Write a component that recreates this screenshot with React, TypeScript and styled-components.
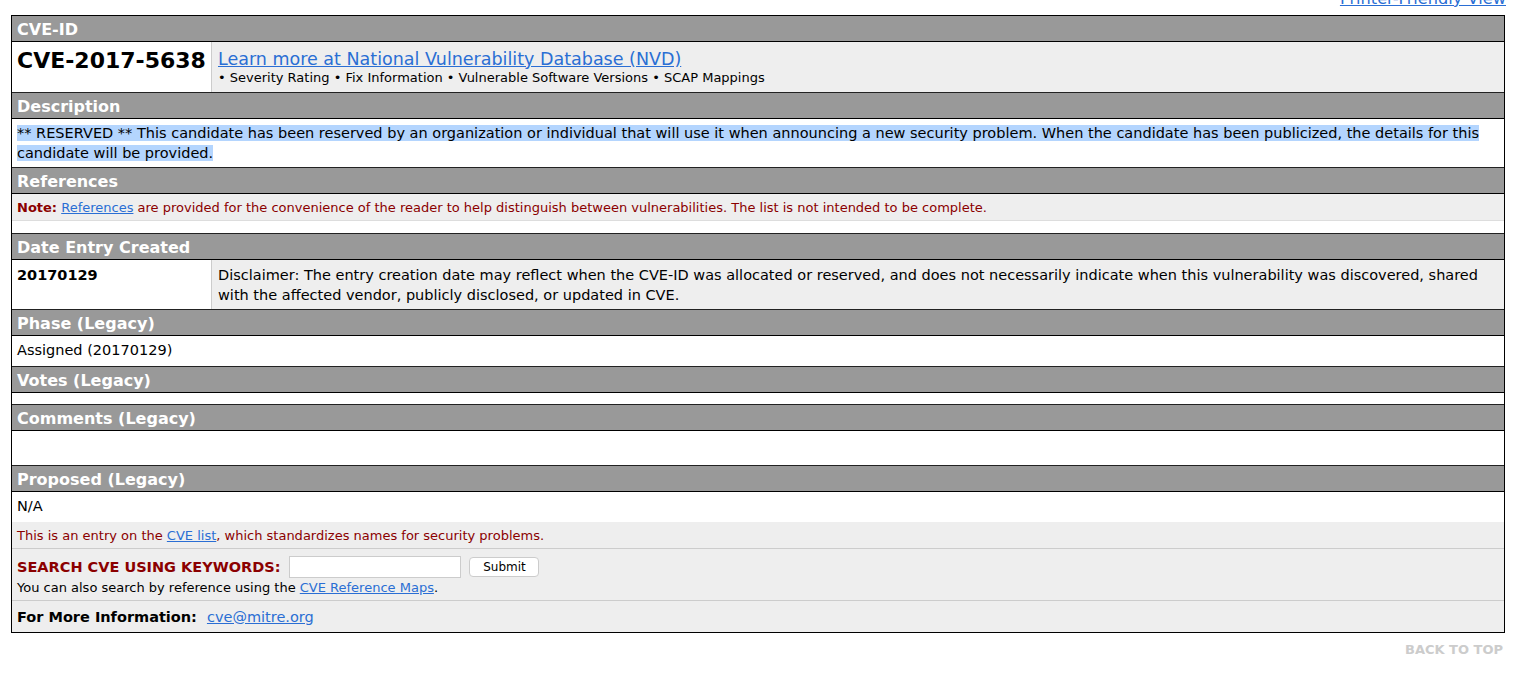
import React from "react";
import styled, { createGlobalStyle } from "styled-components";

const Global = createGlobalStyle`
  html, body { margin: 0; padding: 0; background: #fff; }
  body { font-family: "DejaVu Sans", Verdana, sans-serif; color: #000; overflow: hidden; }
  a { color: #2a6ed4; }
`;

const Page = styled.div`
  width: 1494px;
  padding-left: 11px;
`;

const TopLinkRow = styled.div`
  display: flex;
  justify-content: flex-end;
  margin-top: -9px;
  margin-right: -1px;
  height: 16px;
  line-height: 16px;
  font-size: 16.2px;
`;

const Table = styled.div`
  margin-top: 8px;
  border: 1px solid #000;
  display: flex;
  flex-direction: column;
`;

const SectionHeader = styled.div<{ $first?: boolean }>`
  height: 23px;
  padding-top: 2px;
  line-height: 23px;
  background: #999;
  color: #fff;
  font-weight: bold;
  font-size: 16px;
  padding-left: 5px;
  border-top: ${(p) => (p.$first ? "none" : "1px solid #222")};
  border-bottom: 1px solid #000;
`;

const SplitRow = styled.div<{ $h: number }>`
  display: grid;
  grid-template-columns: 200px 1fr;
  height: ${(p) => p.$h}px;
  align-items: stretch;
`;

const LeftCell = styled.div<{ $pad: number }>`
  background: #fff;
  border-right: 1px solid #ccc;
  padding: ${(p) => p.$pad}px 5px 0;
  display: flex;
  align-items: flex-start;
  white-space: nowrap;
`;

const RightCell = styled.div<{ $center?: boolean }>`
  background: #eee;
  padding: ${(p) => (p.$center ? "0 6px" : "5px 6px")};
  display: flex;
  flex-direction: column;
  justify-content: ${(p) => (p.$center ? "center" : "flex-start")};
  font-size: 14.5px;
  line-height: 20px;
`;

const CveId = styled.span`
  font-weight: bold;
  font-size: 22px;
  line-height: 26px;
`;

const BigLink = styled.a`
  font-size: 17.5px;
  line-height: 20px;
`;

const Bullets = styled.div`
  font-size: 13px;
  line-height: 17px;
`;

const DateId = styled.span`
  font-weight: bold;
  font-size: 14.5px;
  line-height: 20px;
`;

const TextCell = styled.div<{ $h?: number }>`
  background: #fff;
  min-height: ${(p) => p.$h ?? 0}px;
  padding: 4px 5px;
  font-size: 14.5px;
  line-height: 20px;
  color: #000;
  box-sizing: border-box;
`;

const Spacer = styled.div<{ $h: number }>`
  height: ${(p) => p.$h}px;
  background: #fff;
`;

const Selected = styled.span`
  background: #b4d5fe;
`;

const Note = styled.div`
  background: #eee;
  color: #8b0000;
  font-size: 13px;
  height: 26px;
  line-height: 28px;
  padding: 0 5px;
  border-bottom: 1px solid #ddd;
`;

const NoteLabel = styled.b`
  color: #8b0000;
`;

const Footer = styled.div`
  background: #eee;
  display: flex;
  flex-direction: column;
`;

const FooterBlock = styled.div<{ $h: number; $line?: boolean; $shift?: number }>`
  min-height: ${(p) => p.$h}px;
  padding: ${(p) => p.$shift ?? 0}px 5px 0;
  border-bottom: ${(p) => (p.$line ? "1px solid #ccc" : "none")};
  box-sizing: border-box;
  display: flex;
  flex-direction: column;
  justify-content: center;
`;

const FooterText = styled.div<{ $red?: boolean }>`
  font-size: 13px;
  line-height: 16px;
  color: ${(p) => (p.$red ? "#8b0000" : "#000")};
`;

const SearchLine = styled.div`
  display: flex;
  align-items: center;
  gap: 9px;
  height: 26px;
`;

const SearchLabel = styled.span`
  font-weight: bold;
  font-size: 14.5px;
  color: #8b0000;
`;

const SearchInput = styled.input`
  width: 166px;
  height: 20px;
  border: 1px solid #ccc;
  padding: 0 2px;
  margin: 0;
  background: #fff;
  box-sizing: content-box;
`;

const SubmitButton = styled.button`
  font-family: "DejaVu Sans", Verdana, sans-serif;
  font-size: 12px;
  height: 20px;
  width: 70px;
  padding: 0;
  background: #fff;
  border: 1px solid #ccc;
  border-radius: 4px;
  color: #000;
  margin-left: -1px;
`;

const InfoLine = styled.div`
  font-size: 14.5px;
  display: flex;
  gap: 10px;
  align-items: center;
`;

const InfoLabel = styled.b``;

const BackRow = styled.div`
  display: flex;
  justify-content: flex-end;
  padding-top: 9px;
  padding-right: 2px;
  font-size: 13px;
  font-weight: bold;
  color: #ccc;
  line-height: 16px;
`;

export default function App() {
  return (
    <>
      <Global />
      <Page>
        <TopLinkRow>
          <a href="#">Printer-Friendly View</a>
        </TopLinkRow>
        <Table>
          <SectionHeader $first>CVE-ID</SectionHeader>
          <SplitRow $h={50}>
            <LeftCell $pad={6}>
              <CveId>CVE-2017-5638</CveId>
            </LeftCell>
            <RightCell $center>
              <BigLink href="#">Learn more at National Vulnerability Database (NVD)</BigLink>
              <Bullets>• Severity Rating • Fix Information • Vulnerable Software Versions • SCAP Mappings</Bullets>
            </RightCell>
          </SplitRow>
          <SectionHeader>Description</SectionHeader>
          <TextCell $h={48}>
            <Selected>
              ** RESERVED ** This candidate has been reserved by an organization or individual that will use it when
              announcing a new security problem. When the candidate has been publicized, the details for this candidate
              will be provided.{" "}
            </Selected>
          </TextCell>
          <SectionHeader>References</SectionHeader>
          <Note>
            <NoteLabel>Note:</NoteLabel> <a href="#">References</a> are provided for the convenience of the reader to
            help distinguish between vulnerabilities. The list is not intended to be complete.
          </Note>
          <Spacer $h={12} />
          <SectionHeader>Date Entry Created</SectionHeader>
          <SplitRow $h={49}>
            <LeftCell $pad={5}>
              <DateId>20170129</DateId>
            </LeftCell>
            <RightCell>
              Disclaimer: The entry creation date may reflect when the CVE-ID was allocated or reserved, and does not
              necessarily indicate when this vulnerability was discovered, shared with the affected vendor, publicly
              disclosed, or updated in CVE.
            </RightCell>
          </SplitRow>
          <SectionHeader>Phase (Legacy)</SectionHeader>
          <TextCell $h={30}>Assigned (20170129)</TextCell>
          <SectionHeader>Votes (Legacy)</SectionHeader>
          <Spacer $h={11} />
          <SectionHeader>Comments (Legacy)</SectionHeader>
          <Spacer $h={34} />
          <SectionHeader>Proposed (Legacy)</SectionHeader>
          <TextCell $h={30}>N/A</TextCell>
          <Footer>
            <FooterBlock $h={27} $line $shift={1}>
              <FooterText $red>
                This is an entry on the <a href="#">CVE list</a>, which standardizes names for security problems.
              </FooterText>
            </FooterBlock>
            <FooterBlock $h={52} $line>
              <SearchLine>
                <SearchLabel>SEARCH CVE USING KEYWORDS:</SearchLabel>
                <SearchInput type="text" />
                <SubmitButton>Submit</SubmitButton>
              </SearchLine>
              <FooterText>
                You can also search by reference using the <a href="#">CVE Reference Maps</a>.
              </FooterText>
            </FooterBlock>
            <FooterBlock $h={31}>
              <InfoLine>
                <InfoLabel>For More Information:</InfoLabel>
                <a href="#">cve@mitre.org</a>
              </InfoLine>
            </FooterBlock>
          </Footer>
        </Table>
        <BackRow>BACK TO TOP</BackRow>
      </Page>
    </>
  );
}
